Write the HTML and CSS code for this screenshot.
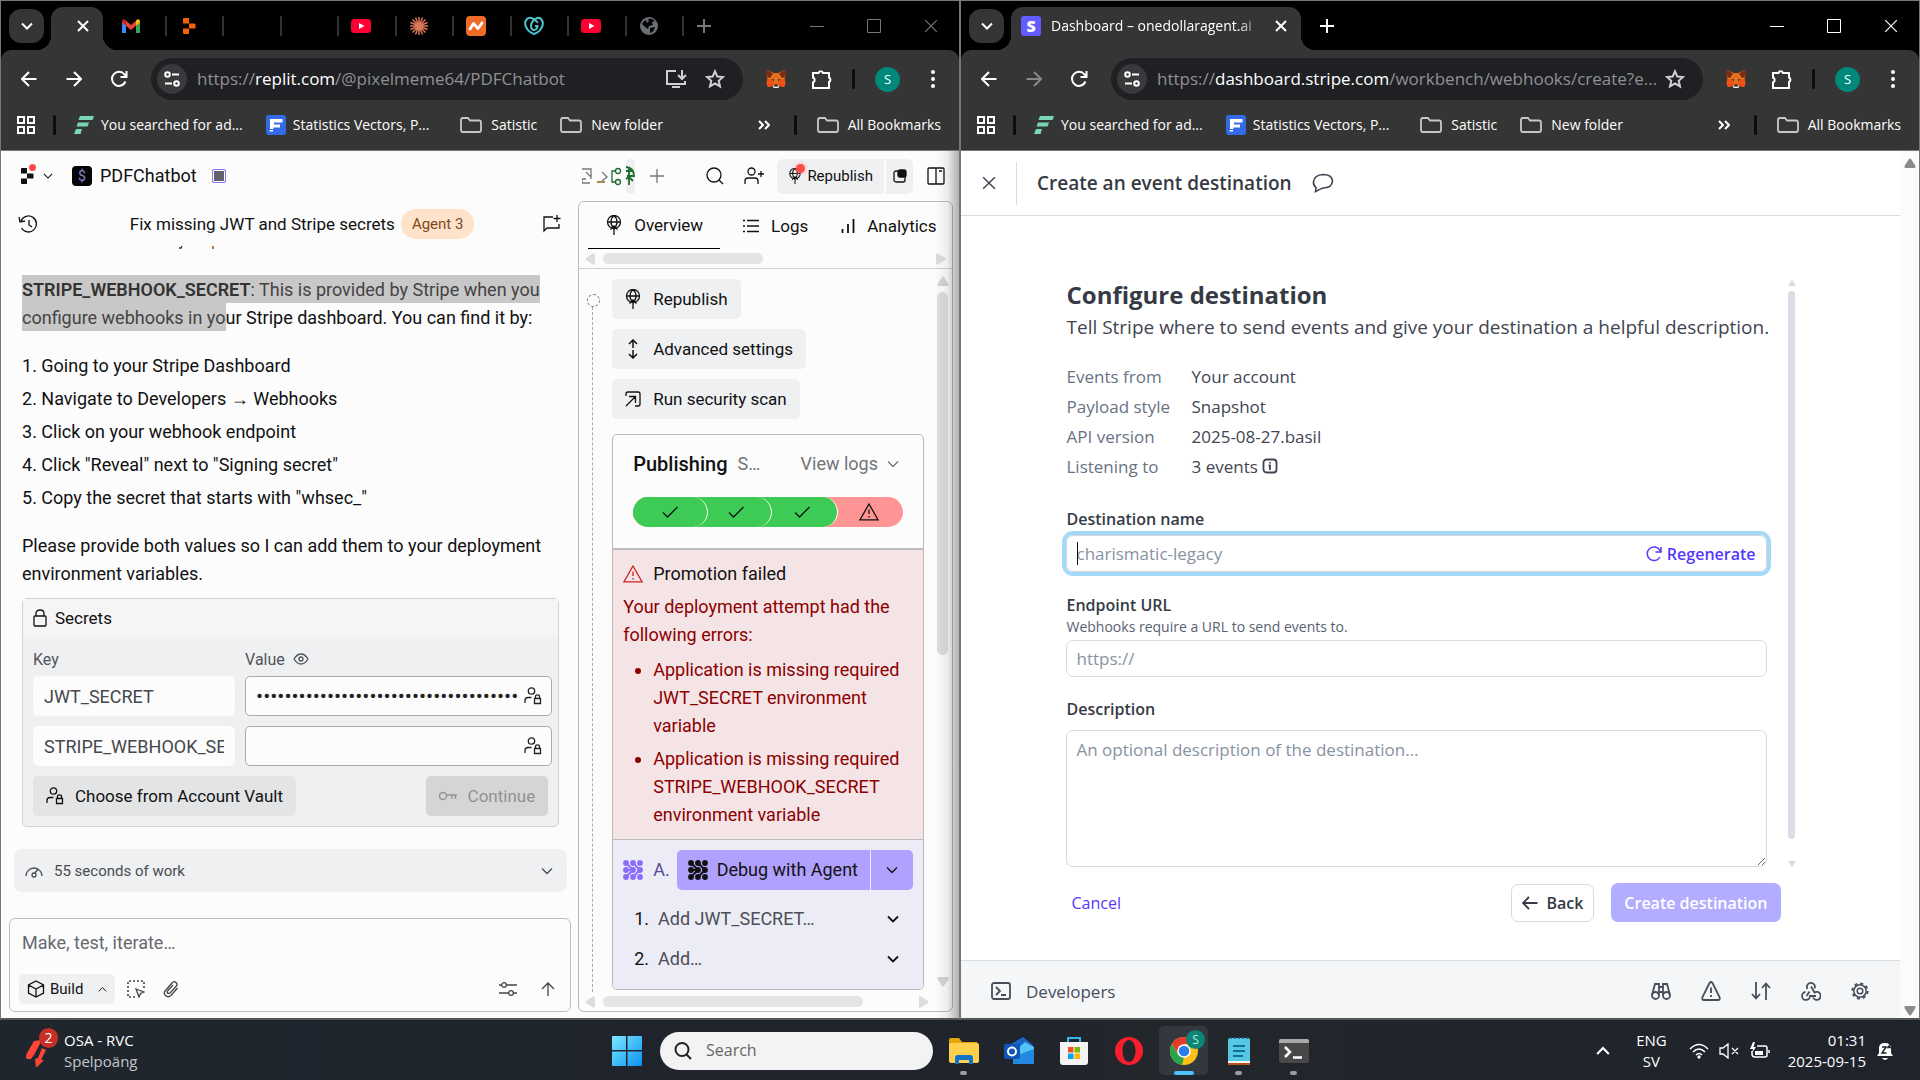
FILE: index.html
```html
<!DOCTYPE html>
<html lang="en">
<head>
<meta charset="utf-8">
<title>Desktop</title>
<link rel="stylesheet" href="styles.css">
</head>
<body>
<svg class="sprite" aria-hidden="true">
  <symbol id="chev" viewBox="0 0 12 12"><path d="M1 3.5 6 8.5 11 3.5"/></symbol>
  <symbol id="x" viewBox="0 0 12 12"><path d="M1 1 11 11M11 1 1 11"/></symbol>
  <symbol id="plus" viewBox="0 0 14 14"><path d="M7 0V14M0 7H14"/></symbol>
  <symbol id="arrow" viewBox="0 0 16 16"><path d="M15.500 8H1.500M8 1 1 8 8 15"/></symbol>
  <symbol id="reload" viewBox="0 0 18 18"><path d="M15.500 11.500A7 7 0 1 1 14.500 4.500L16 6M16.500 1V7H10.500"/></symbol>
  <symbol id="tune" viewBox="0 0 16 16"><circle cx="3.500" cy="3.500" r="2.300"/><path d="M8 3.500H15M1 12.500H8"/><circle cx="12.500" cy="12.500" r="2.300"/></symbol>
  <symbol id="star" viewBox="0 0 20 20"><path d="M10 2.300 12.300 7.500 18 8 13.700 11.800 15 17.400 10 14.400 5 17.400 6.300 11.800 2 8 7.700 7.500Z"/></symbol>
  <symbol id="fox" viewBox="0 0 20 20"><g stroke="none"><path fill="#e2701c" d="M1 1 8 4H12L19 1 20 6 18.500 10 19.500 14 18 18 13 17 11.500 19H8.500L7 17 2 18 .500 14 1.500 10 0 6Z"/><path fill="#7a2a10" d="M1 1 7 4.500 4 9 1 8 0 6ZM19 1 13 4.500 16 9 19 8 20 6Z"/><path fill="#f04f16" d="M1.500 10 6.500 11 8 14 7 17 2 18 .500 14ZM18.500 10 13.500 11 12 14 13 17 18 18 19.500 14Z"/><path fill="#1f2937" d="M5.500 10.500 8 10 8 12ZM14.500 10.500 12 10 12 12Z"/><path fill="#f5f5f5" d="M7 16 8.500 17H11.500L13 16 12.500 19H7.500Z"/><path fill="#222" d="M8.500 15.500H11.500L12 17.500H8Z"/></g></symbol>
  <symbol id="puzzle" viewBox="0 0 22 22"><path d="M2 5H7.500A2.300 2.300 0 0 1 12 5H18V9.500A2.500 2.500 0 0 1 18 14V20H2V14.500A2.700 2.700 0 0 0 2 9.500Z"/></symbol>
  <symbol id="grid" viewBox="0 0 18 18"><path d="M1 1H7V7H1ZM11 1H17V7H11ZM1 11H7V17H1ZM11 11H17V17H11Z"/></symbol>
  <symbol id="folder" viewBox="0 0 22 16"><path d="M1 3Q1 1 3 1H8L10 3.500H19Q21 3.500 21 5.500V13Q21 15 19 15H3Q1 15 1 13Z"/></symbol>
  <symbol id="more" viewBox="0 0 12 10"><path d="M1 1 5 5 1 9M7 1 11 5 7 9"/></symbol>
  <symbol id="fgreen" viewBox="0 0 20 18"><path fill="#76d7b2" d="M6 0H20L18.500 4H4.500ZM4 6.500H15L13.500 10.500H2.500ZM2 13H8L6.500 18H0Z"/></symbol>
  <symbol id="fblue" viewBox="0 0 20 20"><rect width="20" height="20" rx="3" fill="#316be8"/><path fill="#fff" d="M4 4H16.500V7.500H8V9.500H14V12.500H7.500V14H4ZM3.500 15H7V16.500H3.500Z"/></symbol>
  <symbol id="yt" viewBox="0 0 20 20"><rect y="3" width="20" height="14" rx="3.500" fill="#ff0033"/><path fill="#fff" d="M8 7 13.500 10 8 13Z"/></symbol>
  <symbol id="replit" viewBox="0 0 14 16"><path stroke="none" fill="currentColor" d="M2 0H7V5.500H1V1Q1 0 2 0ZM7 5.500H12.500Q13.500 5.500 13.500 6.500V10.500H7ZM1 10.500H7V16H2Q1 16 1 15Z"/></symbol>
  <symbol id="globe" viewBox="0 0 16 20"><circle cx="8" cy="7" r="6.500"/><path d="M1.500 7H14.500M8 .500C4 4 4 10 8 13.500C12 10 12 4 8 .500"/><path d="M8 20V11M4.500 14.500 8 11 11.500 14.500"/></symbol>
  <symbol id="vault" viewBox="0 0 18 18"><circle cx="7.500" cy="4" r="3.200"/><path d="M1 16V13.500Q1 10.500 4 10.500H7.500"/><path d="M10.500 11.500H16.500V16.500H10.500ZM11.500 11.500V9.500Q11.500 7.800 13.500 7.800T15.500 9.500V11.500"/></symbol>
  <symbol id="warn" viewBox="0 0 20 18"><path d="M10 1 19 16.800H1Z"/><path d="M10 6.500V11M10 13V14.500"/></symbol>
  <symbol id="check" viewBox="0 0 16 12"><path d="M1 6.500 5.500 11 15.500 1"/></symbol>
  <symbol id="agent" viewBox="0 0 20 20"><g fill="currentColor" stroke="none"><circle cx="3" cy="3" r="2.900"/><circle cx="10" cy="3" r="2.900"/><circle cx="17" cy="3" r="2.900"/><circle cx="3" cy="10" r="2.900"/><circle cx="10" cy="10" r="2.900"/><circle cx="17" cy="10" r="2.900"/><circle cx="3" cy="17" r="2.900"/><circle cx="10" cy="17" r="2.900"/><circle cx="17" cy="17" r="2.900"/></g><path stroke="currentColor" stroke-width="2" fill="none" d="M3 3 10 10 3 17M10 3 17 10 10 17M3 10H10"/></symbol>
  <symbol id="tri" viewBox="0 0 12 10"><path fill="currentColor" d="M5 1Q6 0 7 1L11.500 8Q12 10 10.500 10H1.500Q0 10 .500 8Z"/></symbol>
</svg>

<div class="desktop">
  <section class="window">
    <header class="chrome">
      <div class="tabstrip dim">
        <button class="tabsearch" aria-label="Search tabs"><svg width="12" height="12"><use href="#chev"/></svg></button>
        <div class="tab-active small"><button aria-label="Close tab"><svg width="12" height="12"><use href="#x"/></svg></button></div>
        <div class="tabs">
          <span class="tab"><svg width="20" height="20" viewBox="0 0 20 20"><path fill="#4285f4" d="M1 5V17H5V8Z"/><path fill="#34a853" d="M15 8V17H19V5Z"/><path fill="#ea4335" d="M4 4 10 9 16 4V9L10 14 4 9Z"/><path fill="#c5221f" d="M1 5Q2 2 5 4.500V9.500L1 6.500Z"/><path fill="#fbbc04" d="M19 5Q18 2 15 4.500V9.500L19 6.500Z"/></svg></span>
          <span class="tab orange"><svg width="20" height="16"><use href="#replit"/></svg></span>
          <span class="tab"></span>
          <span class="tab"></span>
          <span class="tab"><svg width="20" height="20"><use href="#yt"/></svg></span>
          <span class="tab"><svg width="20" height="20" viewBox="0 0 20 20"><path stroke="#d97757" stroke-width="1.500" d="M10 1V19M1 10H19M3.500 3.500 16.500 16.500M16.500 3.500 3.500 16.500M6.500 1.500 13.500 18.500M13.500 1.500 6.500 18.500M1.500 6.500 18.500 13.500M18.500 6.500 1.500 13.500"/></svg></span>
          <span class="tab"><svg width="20" height="20" viewBox="0 0 20 20"><rect width="20" height="20" rx="4" fill="#f06a28"/><path stroke="#fff" stroke-width="2.800" fill="none" stroke-linejoin="round" stroke-linecap="round" d="M4 13 7.500 7.500 12 12.500 16 7"/></svg></span>
          <span class="tab"><svg width="20" height="20" viewBox="0 0 20 20"><path stroke="#4fc4cf" stroke-width="2" d="M10 18C2 15 -1 7 3 3C6 0 11 3 14 7M10 18C18 15 21 7 17 3C14 0 8 4 7 9Q7 14 10 14T13.500 10H11"/></svg></span>
          <span class="tab"><svg width="20" height="20"><use href="#yt"/></svg></span>
          <span class="tab"><svg width="20" height="20" viewBox="0 0 20 20"><circle cx="10" cy="10" r="9" fill="#6b6e74"/><path fill="#050505" d="M9 3Q13 2 16 5L13 6 14 9 10 10 9 13 6 11 3 8Q4 5 7 4L8 7 10 5ZM11 12 16 11Q15 16 11 17Z"/></svg></span>
        </div>
        <button class="newtab" aria-label="New tab"><svg width="14" height="14"><use href="#plus"/></svg></button>
        <div class="winctl">
          <button aria-label="Minimize"><svg width="14" height="14"><path d="M0 7.500H14"/></svg></button>
          <button aria-label="Maximize"><svg width="14" height="14"><path d="M.500.500H13.500V13.500H.500Z"/></svg></button>
          <button aria-label="Close"><svg width="14" height="14" viewBox="0 0 12 12"><use href="#x"/></svg></button>
        </div>
      </div>
      <div class="toolbar">
        <button class="nav" aria-label="Back"><svg width="16" height="16"><use href="#arrow"/></svg></button>
        <button class="nav flip" aria-label="Forward"><svg width="16" height="16"><use href="#arrow"/></svg></button>
        <button class="nav" aria-label="Reload"><svg width="18" height="18"><use href="#reload"/></svg></button>
        <div class="omnibox">
          <button class="site" aria-label="Site information"><svg width="16" height="16"><use href="#tune"/></svg></button>
          <span class="url">https://<b>replit.com</b>/@pixelmeme64/PDFChatbot</span>
          <button aria-label="Install"><svg width="22" height="20" viewBox="0 0 22 20"><path d="M11 2H2V15H20V12M17 1V9M13 6 17 10 21 6M7 18H15"/></svg></button>
          <button class="fave" aria-label="Bookmark"><svg width="20" height="20"><use href="#star"/></svg></button>
        </div>
        <button class="ext" aria-label="MetaMask"><svg width="20" height="20"><use href="#fox"/></svg></button>
        <button class="ext" aria-label="Extensions"><svg width="22" height="22"><use href="#puzzle"/></svg></button>
        <span class="sep"></span>
        <button class="avatar">S</button>
        <button class="kebab" aria-label="Menu"><svg width="6" height="20"><g fill="#fff" stroke="none"><circle cx="3" cy="3" r="2"/><circle cx="3" cy="10" r="2"/><circle cx="3" cy="17" r="2"/></g></svg></button>
      </div>
      <nav class="bookmarks">
        <svg width="18" height="18"><use href="#grid"/></svg><span class="sep"></span>
        <a href="#" class="bm first"><svg width="20" height="18"><use href="#fgreen"/></svg>You searched for ad...</a>
        <a href="#" class="bm"><svg width="20" height="20"><use href="#fblue"/></svg>Statistics Vectors, P...</a>
        <a href="#" class="bm fold wide"><svg width="22" height="16"><use href="#folder"/></svg>Satistic</a>
        <a href="#" class="bm fold"><svg width="22" height="16"><use href="#folder"/></svg>New folder</a>
        <button class="overflow" aria-label="More bookmarks"><svg width="12" height="10"><use href="#more"/></svg></button><span class="sep"></span>
        <a href="#" class="bm fold last"><svg width="22" height="16"><use href="#folder"/></svg>All Bookmarks</a>
      </nav>
    </header>

    <main class="replit">
      <div class="topbar">
        <span class="logo"><svg width="14" height="16"><use href="#replit"/></svg></span>
        <svg class="thin" width="10" height="10"><use href="#chev"/></svg>
        <span class="appicon">$</span>
        <span class="appname">PDFChatbot</span>
        <span class="swatch"></span>
        <span class="minis"><svg width="54" height="35" viewBox="0 0 54 35"><rect x="44" width="9" height="35" rx="4" fill="#eef0f2" stroke="none"/><g fill="none" stroke-width="1.300"><path stroke="#777" d="M0 10H9V20M4 13 9 18M0 24H8M0 24V20H4M20 13 25 18 20 22"/><path stroke="#a08b4a" stroke-width="2" d="M15 23H23"/><g stroke="#1c6b2c"><path d="M33 12H30V23H33"/><circle cx="36" cy="12" r="2.500"/><circle cx="36" cy="23" r="2.500"/><path d="M44 8Q52 9 52 17L45 17M44 12H51M47 8V26M44 20 47 18 51 22" stroke-width="1.800"/></g></g></svg></span>
        <svg class="muted" width="14" height="14"><use href="#plus"/></svg>
        <span class="topicons">
          <svg width="18" height="18" viewBox="0 0 18 18"><circle cx="8" cy="8" r="7"/><path d="M13 13 17 17"/></svg>
          <svg width="20" height="18" viewBox="0 0 20 18"><circle cx="7.500" cy="4.500" r="3.500"/><path d="M1 17V14Q1 11 4 11H11Q14 11 14 14V17M17 4V10M14 7H20"/></svg>
        </span>
        <button class="pub"><span class="pubico"><svg width="14" height="16" viewBox="0 0 16 20"><use href="#globe"/></svg></span>Republish</button>
        <button class="pub2" aria-label="Preview"><svg width="14" height="14" viewBox="0 0 14 14"><rect x="1" y="2" width="11" height="11" rx="2"/><rect x="5" y="1" width="8" height="7" rx="2" fill="#111"/></svg></button>
        <svg width="18" height="18" viewBox="0 0 18 18"><rect x="1" y="1" width="16" height="16" rx="1"/><path d="M9 1V17M12 4H15"/></svg>
      </div>
      <div class="panes">
        <section class="chat">
          <div class="chathead">
            <svg width="20" height="18" viewBox="0 0 20 18"><path d="M3 6A8 8 0 1 1 3.500 13M1 2 2 7 7 6M11 5V10L14 12"/></svg>
            <h2>Fix missing JWT and Stripe secrets</h2><span class="badge">Agent 3</span>
            <svg class="end" width="20" height="18" viewBox="0 0 20 18"><path d="M11 2H2V16L5 13H17V9M15 0V7M11.500 3.500H18.500"/></svg>
          </div>
          <div class="chatbody">
            <svg class="remnant" width="40" height="4" viewBox="0 0 40 4"><path d="M4 0 3 2H1" stroke="#333"/><path d="M35 0V3" stroke="#c1762c" stroke-width="2"/></svg>
            <p><mark><b>STRIPE_WEBHOOK_SECRET</b>: This is provided by Stripe when you configure webhooks in yo</mark>ur Stripe dashboard. You can find it by:</p>
            <ol>
              <li>Going to your Stripe Dashboard</li>
              <li>Navigate to Developers → Webhooks</li>
              <li>Click on your webhook endpoint</li>
              <li>Click "Reveal" next to "Signing secret"</li>
              <li>Copy the secret that starts with "whsec_"</li>
            </ol>
            <p>Please provide both values so I can add them to your deployment environment variables.</p>
            <form class="secrets">
              <h3><svg width="14" height="18" viewBox="0 0 14 18"><rect x="1" y="7" width="12" height="10" rx="1"/><path d="M3 7V4.500Q3 1 7 1T11 4.500V7"/></svg>Secrets</h3>
              <div class="sgrid">
                <span class="lab">Key</span>
                <span class="lab">Value <svg width="16" height="12" viewBox="0 0 16 12"><path d="M1 6Q4 1 8 1T15 6Q12 11 8 11T1 6Z"/><circle cx="8" cy="6" r="2"/></svg></span>
                <input class="key" readonly aria-label="Key 1" value="JWT_SECRET">
                <span class="val"><input type="password" aria-label="Value 1" value="0123456789012345678901234567890123456789012"><svg width="18" height="18"><use href="#vault"/></svg></span>
                <input class="key" readonly aria-label="Key 2" value="STRIPE_WEBHOOK_SECRET">
                <span class="val"><input type="password" aria-label="Value 2"><svg width="18" height="18"><use href="#vault"/></svg></span>
              </div>
              <div class="sbtns">
                <button type="button"><svg width="18" height="18"><use href="#vault"/></svg>Choose from Account Vault</button>
                <button type="button" class="cont" disabled><svg width="18" height="10" viewBox="0 0 18 10"><circle cx="4" cy="5" r="3.500"/><path d="M7.500 4H18M13 4V8M16.500 4V8"/></svg>Continue</button>
              </div>
            </form>
          </div>
          <button class="work"><svg width="18" height="14" viewBox="0 0 18 14"><path d="M1 12A8 8 0 1 1 17 12M10 9 13 5"/><circle cx="9" cy="11" r="2"/></svg>55 seconds of work<svg class="end" width="12" height="12"><use href="#chev"/></svg></button>
          <div class="composer">
            <textarea rows="1" aria-label="Message" placeholder="Make, test, iterate…"></textarea>
            <div class="ctools">
              <button class="build"><svg width="18" height="18" viewBox="0 0 18 18"><path d="M9 1 16.500 5V13L9 17 1.500 13V5ZM1.500 5 9 9 16.500 5M9 9V17"/></svg>Build<svg class="flipy" width="9" height="9"><use href="#chev"/></svg></button>
              <svg width="18" height="18" viewBox="0 0 18 18"><path stroke-dasharray="2 2" stroke-width="1.600" d="M8 17H1V1H17V8"/><path d="M9 9 17 12 13.500 13.500 12 17Z"/></svg>
              <svg class="clip" width="16" height="18" viewBox="0 0 16 18"><path d="M14.500 8 8 15.500Q5 18 2.500 15.500T2.500 10.500L9 3Q11 .500 13 2.500T13 6.500L7 13Q5.500 14 4.500 13T5 10.500L10 5"/></svg>
              <svg class="end" width="18" height="14" viewBox="0 0 18 14"><circle cx="5" cy="3" r="2.300"/><circle cx="12" cy="11" r="2.300"/><path d="M0 3H2.700M7.300 3H18M0 11H9.700M14.300 11H18"/></svg>
              <svg width="14" height="14" viewBox="0 0 14 14"><path d="M7 14V1M1 7 7 1 13 7"/></svg>
            </div>
          </div>
        </section>

        <section class="deploy">
          <nav class="dtabs">
            <a href="#" class="on"><svg width="16" height="20"><use href="#globe"/></svg>Overview</a>
            <a href="#"><svg width="16" height="14" viewBox="0 0 16 14"><path d="M4 1.500H16M4 7H16M4 12.500H16M0 1.500H2M0 7H2M0 12.500H2"/></svg>Logs</a>
            <a href="#"><svg width="14" height="14" viewBox="0 0 14 14"><path stroke-width="1.800" d="M1.500 14V10M7 14V5M12.500 14V0"/></svg>Analytics</a>
          </nav>
          <div class="hscroll top"><svg class="left" width="12" height="10"><use href="#tri"/></svg><i></i><svg class="right" width="12" height="10"><use href="#tri"/></svg></div>
          <div class="dbody">
            <div class="timeline"></div>
            <div class="dmain">
              <button class="act"><svg width="16" height="20"><use href="#globe"/></svg>Republish</button>
              <button class="act"><svg width="16" height="20" viewBox="0 0 16 20"><path stroke-width="1.500" d="M8 9V1M4 5 8 1 12 5M8 11V19M4 15 8 19 12 15"/></svg>Advanced settings</button>
              <button class="act"><svg width="16" height="20" viewBox="0 0 16 20"><path d="M1 7V5Q1 3 3 3H13Q15 3 15 5V15Q15 17 13 17H10M1 17 10 8M4 7.500H10.500V14"/></svg>Run security scan</button>
              <div class="card">
                <div class="pubhead">
                  <div class="prow"><h3>Publishing</h3><span class="gray">S…</span><button class="gray vlogs">View logs<svg width="12" height="12"><use href="#chev"/></svg></button></div>
                  <div class="steps"><span><svg width="16" height="12"><use href="#check"/></svg></span><span><svg width="16" height="12"><use href="#check"/></svg></span><span><svg width="16" height="12"><use href="#check"/></svg></span><span class="bad"><svg width="20" height="18"><use href="#warn"/></svg></span></div>
                </div>
                <div class="fail">
                  <p class="ftitle"><svg width="20" height="18"><use href="#warn"/></svg>Promotion failed</p>
                  <p>Your deployment attempt had the following errors:</p>
                  <ul><li>Application is missing required JWT_SECRET environment variable</li><li>Application is missing required STRIPE_WEBHOOK_SECRET environment variable</li></ul>
                </div>
                <div class="debug">
                  <div class="drow"><svg class="purple" width="20" height="20"><use href="#agent"/></svg><span class="a">A.</span><button class="dbg"><svg width="20" height="20"><use href="#agent"/></svg>Debug with Agent</button><button class="dd" aria-label="More"><svg width="12" height="12"><use href="#chev"/></svg></button></div>
                  <button class="todo"><b>1.</b>Add JWT_SECRET…<svg width="12" height="12"><use href="#chev"/></svg></button>
                  <button class="todo"><b>2.</b>Add…<svg width="12" height="12"><use href="#chev"/></svg></button>
                </div>
              </div>
            </div>
            <div class="vscroll"><svg width="12" height="10"><use href="#tri"/></svg><i></i><svg class="down" width="12" height="10"><use href="#tri"/></svg></div>
          </div>
          <div class="hscroll bottom"><svg class="left" width="12" height="10"><use href="#tri"/></svg><i></i><svg class="right" width="12" height="10"><use href="#tri"/></svg></div>
        </section>
      </div>
      <div class="shade"></div>
    </main>
  </section>

  <section class="window">
    <header class="chrome">
      <div class="tabstrip">
        <button class="tabsearch" aria-label="Search tabs"><svg width="12" height="12"><use href="#chev"/></svg></button>
        <div class="tab-active"><span class="fav">S</span><span class="ttl">Dashboard – onedollaragent.ai</span><button aria-label="Close tab"><svg width="12" height="12"><use href="#x"/></svg></button></div>
        <button class="newtab" aria-label="New tab"><svg width="14" height="14"><use href="#plus"/></svg></button>
        <div class="winctl">
          <button aria-label="Minimize"><svg width="14" height="14"><path d="M0 7.500H14"/></svg></button>
          <button aria-label="Maximize"><svg width="14" height="14"><path d="M.500.500H13.500V13.500H.500Z"/></svg></button>
          <button aria-label="Close"><svg width="14" height="14" viewBox="0 0 12 12"><use href="#x"/></svg></button>
        </div>
      </div>
      <div class="toolbar">
        <button class="nav" aria-label="Back"><svg width="16" height="16"><use href="#arrow"/></svg></button>
        <button class="nav flip off" aria-label="Forward" disabled><svg width="16" height="16"><use href="#arrow"/></svg></button>
        <button class="nav" aria-label="Reload"><svg width="18" height="18"><use href="#reload"/></svg></button>
        <div class="omnibox">
          <button class="site" aria-label="Site information"><svg width="16" height="16"><use href="#tune"/></svg></button>
          <span class="url">https://<b>dashboard.stripe.com</b>/workbench/webhooks/create?e...</span>
          <button aria-label="Bookmark"><svg width="20" height="20"><use href="#star"/></svg></button>
        </div>
        <button class="ext" aria-label="MetaMask"><svg width="20" height="20"><use href="#fox"/></svg></button>
        <button class="ext" aria-label="Extensions"><svg width="22" height="22"><use href="#puzzle"/></svg></button>
        <span class="sep"></span>
        <button class="avatar">S</button>
        <button class="kebab" aria-label="Menu"><svg width="6" height="20"><g fill="#fff" stroke="none"><circle cx="3" cy="3" r="2"/><circle cx="3" cy="10" r="2"/><circle cx="3" cy="17" r="2"/></g></svg></button>
      </div>
      <nav class="bookmarks">
        <svg width="18" height="18"><use href="#grid"/></svg><span class="sep"></span>
        <a href="#" class="bm first"><svg width="20" height="18"><use href="#fgreen"/></svg>You searched for ad...</a>
        <a href="#" class="bm"><svg width="20" height="20"><use href="#fblue"/></svg>Statistics Vectors, P...</a>
        <a href="#" class="bm fold wide"><svg width="22" height="16"><use href="#folder"/></svg>Satistic</a>
        <a href="#" class="bm fold"><svg width="22" height="16"><use href="#folder"/></svg>New folder</a>
        <button class="overflow" aria-label="More bookmarks"><svg width="12" height="10"><use href="#more"/></svg></button><span class="sep"></span>
        <a href="#" class="bm fold last"><svg width="22" height="16"><use href="#folder"/></svg>All Bookmarks</a>
      </nav>
    </header>

    <main class="stripe">
      <div class="spage">
        <header class="shead"><button class="close" aria-label="Close"><svg width="14" height="14"><use href="#x"/></svg></button><h1>Create an event destination</h1><svg width="22" height="20" viewBox="0 0 22 20"><path stroke-width="1.600" d="M3.500 18.500 4 14.500Q1 12 1.500 8.500Q2.500 2 11 1.500Q20 1.500 20.500 8Q20 15 11 15Q7 16.500 3.500 18.500Z"/></svg></header>
        <form class="config">
          <div class="scrollarea">
            <div class="fields">
              <h2>Configure destination</h2>
              <p class="lead">Tell Stripe where to send events and give your destination a helpful description.</p>
              <dl><dt>Events from</dt><dd>Your account</dd><dt>Payload style</dt><dd>Snapshot</dd><dt>API version</dt><dd>2025-08-27.basil</dd><dt>Listening to</dt><dd>3 events <svg width="16" height="16" viewBox="0 0 16 16"><rect x="1.500" y="1.500" width="13" height="13" rx="3" stroke-width="1.800"/><path stroke-width="1.800" d="M8 4V5.500M6.500 7.500H8V12"/></svg></dd></dl>
              <label for="name">Destination name</label>
              <div class="namebox"><i class="caret"></i><input id="name" placeholder="charismatic-legacy"><button type="button"><svg width="16" height="16" viewBox="0 0 16 16"><path stroke-width="1.500" d="M14 11A6.800 6.800 0 1 1 14 4.500L15 6M15 1V6H9.500"/></svg>Regenerate</button></div>
              <label for="url">Endpoint URL</label>
              <small>Webhooks require a URL to send events to.</small>
              <input id="url" class="field" placeholder="https://">
              <label for="desc">Description</label>
              <textarea id="desc" class="field" placeholder="An optional description of the destination…"></textarea>
            </div>
            <div class="sbar"><svg width="8" height="6" viewBox="0 0 12 10"><use href="#tri"/></svg><i></i><svg class="down" width="8" height="6" viewBox="0 0 12 10"><use href="#tri"/></svg></div>
          </div>
          <div class="actions"><a href="#">Cancel</a><button type="button" class="back"><svg width="16" height="14" viewBox="0 0 16 14"><path stroke-width="1.800" d="M15.500 7H1.500M7 1 1 7 7 13"/></svg>Back</button><button type="button" class="create" disabled>Create destination</button></div>
        </form>
        <footer class="sfoot">
          <svg width="20" height="18" viewBox="0 0 20 18"><rect x="1" y="1" width="18" height="16" rx="2"/><path d="M5 5 9 9 5 13M10 13H15"/></svg><span>Developers</span>
          <svg width="20" height="18" viewBox="0 0 20 18"><circle cx="4.500" cy="13.500" r="3.500"/><circle cx="15.500" cy="13.500" r="3.500"/><path d="M1 13 4 2H8V13M19 13 16 2H12V13M8 5H12M8 10H12"/></svg>
          <svg width="20" height="20" viewBox="0 0 20 20"><path d="M8.500 2Q10 0 11.500 2L18.500 16Q19.500 19 17 19H3Q.500 19 1.500 16ZM10 6.500V12M10 14V16"/></svg>
          <svg width="20" height="18" viewBox="0 0 20 18"><path d="M5 0V16M1 12 5 16.500 9 12M15 18V2M11 6 15 1.500 19 6"/></svg>
          <svg width="20" height="20" viewBox="0 0 20 20"><path d="M6.500 8A4 4 0 1 1 13.500 7.500M10 5.500 13.500 11.500A4 4 0 1 1 12 16.500M8.500 10.500 5.500 15M4.500 11A4 4 0 1 0 9 15H15"/></svg>
          <svg width="18" height="18" viewBox="0 0 18 18"><circle cx="9" cy="9" r="2.800" stroke-width="1.500"/><circle cx="9" cy="9" r="6.200" stroke-width="1.500"/><circle cx="9" cy="9" r="7.600" stroke-dasharray="2.970 3" stroke-width="2"/></svg>
        </footer>
      </div>
      <div class="wscroll"><svg width="12" height="10"><use href="#tri"/></svg><svg class="down" width="12" height="10"><use href="#tri"/></svg></div>
    </main>
  </section>
</div>

<footer class="taskbar">
  <div class="news"><span class="nicon"><svg width="32" height="32" viewBox="0 0 32 32"><path fill="#ff4438" d="M8 6 16 5 8 20 5 24H1Q-1 22 1 18ZM16 13 20 15 15 25 18 25 10 33 9 24 12 23Z"/></svg><em>2</em></span><p>OSA - RVC<br><span>Spelpoäng</span></p></div>
  <div class="apps">
    <svg width="30" height="30" viewBox="0 0 30 30"><defs><linearGradient id="w" x2="1" y2="1"><stop stop-color="#7de8ff"/><stop offset="1" stop-color="#0a93f5"/></linearGradient></defs><path fill="url(#w)" d="M0 1Q0 0 1 0H14V14H0ZM15.500 0H29Q30 0 30 1V14H15.500ZM0 15.500H14V30H1Q0 30 0 29ZM15.500 15.500H30V29Q30 30 29 30H15.500Z"/></svg>
    <label class="search"><svg width="18" height="18" viewBox="0 0 18 18"><circle cx="8" cy="7.500" r="6.500" stroke="#222" stroke-width="2"/><path stroke="#222" stroke-width="2" d="M12.500 12.500 17 17"/></svg><input aria-label="Search" placeholder="Search"></label>
    <span class="app run"><svg width="32" height="28" viewBox="0 0 32 28"><path fill="#e5a50a" d="M1 3Q1 1 3 1H11L14 5H29V12H1Z"/><rect x="1" y="6" width="30" height="20" rx="2" fill="#ffd04d"/><path fill="#1173cc" d="M7 27V21Q7 18 10 18H22Q25 18 25 21V27H21V23H11V27Z"/></svg></span>
    <span class="app"><svg width="32" height="28" viewBox="0 0 32 28"><path fill="#1b66c9" d="M8 7 20 0 30 8V15H8Z"/><path fill="#52c3f5" d="M14 12 22 5 31 10V25Q31 27 28 27H10V15Z"/><path fill="#2389e0" d="M10 20 31 12V25Q31 27 28 27H10Z"/><rect x="1" y="7" width="16" height="15" rx="2" fill="#0f56b8"/><circle cx="9" cy="14.500" r="4" fill="none" stroke="#fff" stroke-width="2"/></svg></span>
    <span class="app"><svg width="30" height="30" viewBox="0 0 30 30"><path fill="none" stroke="#3bb4f2" stroke-width="2" d="M9 8V2H21V8"/><path fill="#f4f4f4" d="M1 6H29V26Q29 29 26 29H4Q1 29 1 26Z"/><path fill="#f25022" d="M9 11H14.500V16.500H9Z"/><path fill="#7fba00" d="M15.500 11H21V16.500H15.500Z"/><path fill="#00a4ef" d="M9 17.500H14.500V23H9Z"/><path fill="#ffb900" d="M15.500 17.500H21V23H15.500Z"/></svg></span>
    <span class="app"><svg width="30" height="30" viewBox="0 0 30 30"><path fill="#fa1e2d" fill-rule="evenodd" d="M15 1A14 14 0 1 0 15 29A14 14 0 1 0 15 1ZM15 4C19 4 21.500 9 21.500 15S19 26 15 26 8.500 21 8.500 15 11 4 15 4Z"/></svg></span>
    <span class="app cur"><svg width="30" height="30" viewBox="0 0 30 30"><circle cx="15" cy="15" r="14" fill="#fbc116"/><path fill="#e33b2e" d="M15 15V8H27Q23 1 15 1T2.900 8L9 18Z"/><path fill="#2ba24c" d="M2.900 8 9 18.500 15 21.500 13 29Q1 26 1 15 1 11 2.900 8Z"/><circle cx="15" cy="15" r="6.800" fill="#fff"/><circle cx="15" cy="15" r="5.300" fill="#2b7de9"/></svg><em>S</em></span>
    <span class="app run"><svg width="24" height="30" viewBox="0 0 24 30"><rect x="1" y="2" width="22" height="27" rx="2" fill="#55c8e6"/><path stroke="#16627f" stroke-width="1.500" stroke-dasharray="2 2" d="M3 2H21"/><path stroke="#14708f" stroke-width="2" d="M6 10H18M6 15H18M6 20H16"/><path fill="#f5f5f5" d="M1 25H23V27H1Z"/><path fill="#b5541c" d="M1 27H23V29H1Z"/></svg></span>
    <span class="app run"><svg width="30" height="24" viewBox="0 0 30 24"><rect width="30" height="24" rx="2" fill="#484848"/><path fill="#aaa" d="M0 2Q0 0 2 0H28Q30 0 30 2V4H0Z"/><path stroke="#fff" stroke-width="2.500" fill="none" d="M6 8 11 13 6 18M14 18.500H23"/></svg></span>
  </div>
  <div class="tray">
    <svg width="14" height="14" class="flipy" viewBox="0 0 12 12"><use href="#chev"/></svg>
    <p class="lang">ENG<br>SV</p>
    <svg width="20" height="16" viewBox="0 0 20 16"><path stroke-width="1.600" d="M1 6Q10 -3 19 6M4 9Q10 3 16 9M7 12Q10 9 13 12"/><circle cx="10" cy="14" r="1" fill="#fff"/></svg>
    <svg width="20" height="16" viewBox="0 0 20 16"><path d="M1 5H4L9 1V15L4 11H1ZM13 5 19 11M19 5 13 11"/></svg>
    <svg width="22" height="18" viewBox="0 0 22 18"><path stroke-width="1.500" d="M8 4H16Q18 4 18 6V13Q18 15 16 15H6Q3 15 3 12V9M20 8V11"/><path fill="#fff" stroke="none" d="M4 0 1 7H4L3 11 7 5H4.500L6 0ZM6 9H14V13H6Z"/></svg>
    <p class="clock">01:31<br>2025-09-15</p>
    <span class="bell"><svg width="18" height="20" viewBox="0 0 18 20"><path fill="#fff" stroke="none" d="M1 15 3 12V7Q3 2 9 2T15 7V12L17 15ZM6 17H12Q9 21 6 17Z"/><path stroke="#1f242b" stroke-width="1.500" d="M6 6H10L6 12H10.500M12 2H15.500L12 6.500H16"/></svg></span>
  </div>
</footer>
</body>
</html>
```

FILE: styles.css
```css
* { box-sizing: border-box; }
body { margin: 0; min-height: 100vh; display: flex; flex-direction: column; font-family: "Open Sans", "Noto Sans", sans-serif; font-size: 14px; background: #1f242b; }
h1, h2, h3, p, ol, ul, dl, dd { margin: 0; padding: 0; }
button, input, textarea { font: inherit; color: inherit; border: 0; padding: 0; background: none; outline: 0; }
button { display: flex; align-items: center; justify-content: center; white-space: nowrap; }
a { color: inherit; text-decoration: none; }
em { font-style: normal; }
svg { flex: none; fill: none; stroke: currentColor; stroke-width: 1.3; }
.sprite { position: absolute; width: 0; height: 0; }
.end { margin-left: auto; }
.down, .flipy { transform: rotate(180deg); }

.desktop { flex: 1; display: grid; grid-template-columns: 1fr 1fr; }
.window { display: flex; flex-direction: column; min-width: 0; border: 1px solid #777; border-bottom: 2px solid #555; background: #000; }

/* browser chrome */
.chrome { color: #fff; border-bottom: 1px solid #777; }
.tabstrip { display: flex; height: 49px; padding-left: 8px; align-items: center; }
.tabstrip svg { stroke-width: 2; }
.tabsearch { width: 35px; height: 34px; border-radius: 12px; background: #353535; margin-right: 7px; }
.tab-active { position: relative; align-self: flex-end; display: flex; align-items: center; width: 290px; height: 43px; padding: 0 14px 6px 10px; border-radius: 12px 12px 0 0; background: #353535; }
.tab-active::before, .tab-active::after { content: ""; position: absolute; bottom: 0; width: 14px; height: 14px; }
.tab-active::before { right: 100%; background: radial-gradient(circle at 0 0, transparent 14px, #353535 14px); }
.tab-active::after { left: 100%; background: radial-gradient(circle at 100% 0, transparent 14px, #353535 14px); }
.tab-active button { margin-left: auto; }
.tab-active.small { width: 52px; }
.fav { width: 20px; height: 20px; margin-right: 10px; border-radius: 3px; background: #635bff; font-size: 16px; line-height: 20px; font-weight: 800; text-align: center; }
.ttl { width: 212px; overflow: hidden; white-space: nowrap; -webkit-mask-image: linear-gradient(90deg, #000 88%, transparent); mask-image: linear-gradient(90deg, #000 88%, transparent); }
.tabs { display: flex; flex: 0 1 575px; margin-left: 6px; }
.tab { flex: 1; display: flex; align-items: center; height: 20px; padding-left: 12px; border-right: 2px solid #333; }
.tab svg { stroke: none; }
.orange { color: #f26207; }
.newtab { width: 40px; height: 34px; }
.tab-active + .newtab { margin-left: 6px; }
.winctl { display: flex; margin-left: auto; }
.winctl button { width: 57px; height: 40px; }
.winctl svg { stroke-width: 1; }
.dim .winctl, .dim .newtab { color: #777; }
.toolbar { display: flex; align-items: center; height: 58px; padding: 0 23px 0 5px; border-radius: 10px 10px 0 0; background: #353535; }
.toolbar svg { stroke-width: 2; }
.nav { width: 45px; height: 42px; }
.flip svg { transform: scaleX(-1); }
.off { color: #888; }
.omnibox { flex: 1; min-width: 0; display: flex; align-items: center; height: 42px; margin: 0 22px 0 10px; padding: 0 18px 0 6px; border-radius: 21px; background: #1f2024; color: #d0d0d0; }
.site { width: 30px; height: 30px; margin-right: 10px; border-radius: 50%; background: #39393c; color: #fff; }
.fave { margin-left: 18px; }
.url { flex: 1; min-width: 0; white-space: nowrap; color: #919191; font-size: 17px; line-height: 24px; }
.url b { color: #fff; font-weight: 400; }
.ext { width: 22px; margin-right: 24px; }
.sep { width: 3px; height: 20px; border-radius: 2px; background: #0c0c0c; }
.toolbar .sep { margin-left: -5px; }
.avatar { width: 25px; height: 25px; margin: 0 30px 0 20px; border-radius: 50%; background: #00897b; font-size: 13px; }
.bookmarks { display: flex; align-items: center; height: 42px; padding: 0 18px 8px 16px; background: #353535; line-height: 20px; white-space: nowrap; }
.bookmarks svg { stroke-width: 2; }
.bookmarks > .sep:nth-child(2) { margin-left: 18px; }
.bm { display: flex; align-items: center; gap: 7px; margin-left: 23px; }
.bm.first { margin-left: 18px; }
.bm svg { stroke-width: 0; }
.fold { gap: 9px; }
.fold.wide { margin-left: 31px; }
.fold svg { stroke: #c8c8c8; stroke-width: 1.8; }
.overflow { margin: 0 24px 0 auto; }
.bm.last { margin-left: 20px; }

/* replit */
.replit { position: relative; flex: 1; display: flex; flex-direction: column; padding: 0 6px 6px 8px; background: #fcfcfc; color: #111; font-family: Roboto, sans-serif; font-size: 17px; line-height: 28px; }
.shade { position: absolute; top: 0; right: 0; bottom: 0; width: 24px; pointer-events: none; background: linear-gradient(90deg, transparent, rgba(0, 0, 0, .06) 50%, rgba(0, 0, 0, .3)); }
.topbar { display: flex; align-items: center; height: 50px; padding: 0 8px 0 11px; }
.logo { position: relative; display: flex; margin-right: 9px; }
.logo::after { content: ""; position: absolute; top: -4px; right: -2px; width: 7px; height: 7px; border-radius: 50%; background: #ff4b4b; }
.appicon { width: 20px; height: 20px; margin: 0 8px 0 19px; border-radius: 4px; background: #050505; color: #8f80d8; font-size: 14px; line-height: 20px; text-align: center; }
.appname { font-size: 18px; }
.swatch { width: 14px; height: 14px; margin-left: 15px; border: 1px solid #8a76f0; border-radius: 2px; background: #5f626b; box-shadow: inset 0 0 0 1px #fff; }
.minis { display: flex; margin: 0 14px 0 auto; }
.muted { color: #777; }
.topicons { display: flex; gap: 20px; margin: 0 13px 0 42px; }
.pub { height: 35px; padding: 0 11px; border-radius: 6px 0 0 6px; background: #eff0f2; font-size: 15px; gap: 5px; }
.pubico { position: relative; display: flex; }
.pubico::after { content: ""; position: absolute; top: -4px; right: -3px; width: 9px; height: 9px; border-radius: 50%; background: #ff4b4b; box-shadow: 0 0 5px #ff9a9a; }
.pub2 { width: 27px; height: 35px; margin: 0 14px 0 2px; border-radius: 0 6px 6px 0; background: #eff0f2; }
.panes { flex: 1; display: grid; grid-template-columns: minmax(0, 3fr) minmax(0, 2fr); gap: 7px; }
.chat { display: flex; flex-direction: column; min-width: 0; }
.chathead { display: flex; align-items: center; height: 45px; padding: 0 9px; }
.chathead h2 { margin: 0 6px 0 auto; padding-left: 24px; font-size: 17px; font-weight: 400; }
.badge { height: 30px; padding: 0 11px; border-radius: 15px; background: #ffe2ca; color: #7c4a1e; font-size: 15px; line-height: 30px; }
.chatbody { padding: 0 12px 0 13px; font-size: 18px; }
.remnant { display: block; margin: 0 0 26px 156px; }
mark { background: #c8c8c8; color: #444; padding: 4px 0 3px; }
mark b { color: #333; font-weight: 600; }
ol { list-style-position: inside; display: grid; gap: 5px; margin: 20px 0; padding: 0; }
ol li::marker { content: counter(list-item) ". "; }
.secrets { margin: 10px 0 22px; border: 1px solid #d0d2d4; border-radius: 5px; background: #eff0f2; }
.secrets h3 { display: flex; align-items: center; gap: 8px; height: 38px; padding: 0 10px; background: #f5f5f5; font-size: 17px; font-weight: 400; }
.sgrid { display: grid; grid-template-columns: minmax(0, 202fr) minmax(0, 307fr); gap: 10px; padding: 9px 6px 10px 10px; }
.lab { height: 20px; line-height: 28px; font-size: 16px; color: #51545a; }
.lab svg { margin-left: 4px; }
.key, .val { width: 100%; min-width: 0; height: 40px; padding: 0 11px; border-radius: 5px; background: #fcfcfc; color: #45484d; }
.val { display: flex; align-items: center; gap: 6px; padding: 0 9px 0 10px; border: 1px solid #a9abad; color: #222; }
.val input { flex: 1; min-width: 0; font-size: 21px; }
.sbtns { display: flex; justify-content: space-between; padding: 0 10px 10px; font-size: 17px; }
.sbtns button { height: 40px; padding: 0 13px; gap: 11px; border-radius: 5px; background: #e3e4e6; }
.sbtns .cont { background: #d5d5d5; color: #909294; }
.work { justify-content: flex-start; height: 43px; margin: 0 4px 0 5px; padding: 0 14px 0 11px; gap: 11px; border-radius: 8px; background: #eff0f2; color: #484b50; font-size: 15px; }
.composer { display: flex; flex-direction: column; gap: 17px; margin-top: auto; padding: 10px 9px 7px; border: 1px solid #bcbec0; border-radius: 6px; height: 94px; }
.composer textarea { height: 28px; padding-left: 3px; resize: none; font-size: 18px; line-height: 28px; overflow: hidden; }
.composer ::placeholder { color: #666a70; opacity: 1; }
.ctools { display: flex; align-items: center; height: 30px; gap: 18px; padding-right: 6px; color: #444; }
.build { height: 30px; margin-right: -6px; padding: 0 8px; border-radius: 5px; background: #eff0f2; color: #111; font-size: 15px; gap: 5px; }
.build .flipy { margin-left: 10px; }
.ctools .end + svg { margin-left: 6px; }

/* deployment pane */
.deploy { display: flex; flex-direction: column; min-width: 0; border: 1px solid #b9bbbd; border-radius: 6px; }
.dtabs { display: flex; gap: 13px; height: 47px; padding-left: 9px; overflow: hidden; white-space: nowrap; }
.dtabs a { display: flex; align-items: center; gap: 12px; padding: 0 10px; }
.dtabs .on { padding: 0 17px 0 18px; border-bottom: 1px solid #000; }
.hscroll { display: flex; align-items: center; height: 19px; padding: 0 5px; color: #dcdddf; }
.hscroll svg, .vscroll svg, .wscroll svg, .sbar svg { stroke: none; }
.hscroll i { height: 11px; margin: 0 auto 0 7px; border-radius: 6px; background: #e3e4e6; width: 44%; }
.hscroll .left { transform: rotate(-90deg); }
.hscroll .right { transform: rotate(90deg); }
.hscroll.bottom i { width: 75%; }
.hscroll.bottom { padding-right: 22px; }
.hscroll.top { border-bottom: 1px solid #cfd1d3; height: 20px; }
.dbody { flex: 1; display: grid; grid-template-columns: 33px minmax(0, 1fr) 18px; font-size: 18px; }
.timeline { position: relative; margin: 38px 19px 0 13px; border-left: 1px dashed #aaa; }
.timeline::before { content: ""; position: absolute; top: -13px; left: -6px; width: 11px; height: 11px; border: 1px dashed #777; border-radius: 50%; background: #fcfcfc; }
.dmain { display: flex; flex-direction: column; align-items: flex-start; gap: 10px; padding: 10px 10px 0 0; }
.act { height: 40px; padding: 0 13px; gap: 12px; border-radius: 5px; background: #eff0f2; font-size: 17px; }
.card { align-self: stretch; margin-top: 5px; border: 1px solid #b9bbbd; border-radius: 5px; }
.pubhead { padding: 14px 20px 21px; border-bottom: 2px solid #bbb; }
.prow { display: flex; align-items: center; height: 30px; gap: 10px; padding-right: 4px; }
.prow h3 { font-size: 20px; font-weight: 500; }
.gray { color: #70747a; }
.vlogs { margin-left: auto; gap: 9px; }
.steps { display: grid; grid-template-columns: repeat(4, 1fr); height: 30px; margin-top: 18px; border-radius: 15px; background: #ff9494; overflow: hidden; }
.steps span { position: relative; display: flex; align-items: center; justify-content: center; border-right: 1px solid #fff; border-radius: 0 15px 15px 0; background: #3ecb55; box-shadow: -20px 0 0 #3ecb55; }
.steps span:nth-child(1) { z-index: 4; margin-right: -7px; }
.steps span:nth-child(2) { z-index: 3; margin-right: -4px; }
.steps span:nth-child(3) { z-index: 2; margin-right: -2px; }
.steps .bad { border: 0; background: none; box-shadow: none; }
.fail { padding: 10px; border-bottom: 1px solid #b9bbbd; background: #f5e4e6; color: #8b0000; }
.ftitle { display: flex; align-items: center; gap: 10px; margin-bottom: 5px; color: #111; }
.ftitle svg { color: #d01f1f; }
.fail ul { display: grid; gap: 5px; margin-top: 7px; padding-left: 30px; }
.debug { padding: 10px; border-radius: 0 0 5px 5px; background: #ebecf5; }
.drow { display: flex; align-items: center; margin-bottom: 9px; }
.purple { color: #8a6cff; }
.a { margin: 0 auto 0 10px; color: #5a4a9c; }
.dbg, .dd { height: 40px; background: #b1a1ff; border-radius: 5px 0 0 5px; }
.dbg { padding: 0 12px 0 11px; gap: 9px; }
.dd { width: 42px; margin-left: 1px; border-radius: 0 5px 5px 0; }
.todo { justify-content: flex-start; width: 100%; height: 40px; padding: 0 14px 0 11px; color: #4c4f55; }
.todo b { margin-right: 9px; color: #111; font-weight: 400; }
.todo svg { margin-left: auto; color: #111; stroke-width: 1.8; }
.vscroll { display: flex; flex-direction: column; align-items: center; padding: 7px 0 5px; color: #d5d6d8; }
.vscroll i { flex: 0 1 51%; width: 11px; margin: 6px 0 auto; border-radius: 6px; background: #dbdddf; }

/* stripe */
.stripe { flex: 1; display: flex; background: #fff; color: #414552; font-size: 17px; }
.spage { flex: 1; display: flex; flex-direction: column; min-width: 0; }
.shead { display: flex; align-items: center; height: 65px; border-bottom: 1px solid #d8dce3; }
.close { width: 56px; height: 43px; border-right: 1px solid #d8dce3; }
.shead h1 { margin: 0 20px; font-size: 19px; font-weight: 600; color: #353a44; }
.config { flex: 1; display: flex; flex-direction: column; width: 100%; max-width: 730px; margin: 0 auto; padding-top: 63px; }
.scrollarea { display: flex; gap: 21px; margin-bottom: 10px; }
.fields { flex: 1; min-width: 0; display: flex; flex-direction: column; }
.fields h2 { font-size: 24px; line-height: 32px; font-weight: 700; color: #353a44; }
.lead { margin-top: 2px; font-size: 19px; line-height: 28px; white-space: nowrap; }
.fields h2, .lead, dl, .fields label, .fields small { padding-left: 1px; }
dl { display: grid; grid-template-columns: 125px 1fr; margin: 21px 0 5px; line-height: 30px; }
dt { color: #687385; }
dd svg { color: #414552; vertical-align: -1px; }
.fields label { margin-top: 20px; line-height: 24px; font-size: 16px; font-weight: 600; color: #353a44; }
.fields small { font-size: 14px; line-height: 19px; margin-bottom: 4px; color: #596171; }
.namebox { position: relative; display: flex; align-items: center; height: 37px; margin: 4px 0 1px; padding: 0 10px; border: 1px solid #d0d7e0; border-radius: 7px; box-shadow: 0 0 0 4px #a4daf8; }
.namebox input { flex: 1; }
.namebox button { gap: 5px; color: #533afd; font-size: 16px; font-weight: 600; }
.caret { position: absolute; left: 10px; top: 6px; width: 1px; height: 23px; background: #111; }
.stripe ::placeholder { color: #8792a2; opacity: 1; }
.field { height: 37px; padding: 0 10px; border: 1px solid #d5dbe1; border-radius: 7px; }
textarea.field { height: 137px; margin-top: 9px; padding: 6px 10px; line-height: 26px; resize: vertical; }
.sbar { display: flex; flex-direction: column; align-items: center; width: 8px; margin-top: 1px; color: #d8dce3; }
.sbar i { flex: 1; width: 7px; margin: 5px 0 22px; border-radius: 4px; background: #d8dde6; }
.actions { display: flex; align-items: center; margin-top: 6px; padding: 0 15px 0 6px; height: 39px; font-size: 16px; }
.actions a { margin-right: auto; color: #533afd; }
.back { height: 38px; gap: 8px; padding: 0 10px; border: 1px solid #d5dbe1; border-radius: 7px; font-weight: 600; color: #353a44; }
.create { height: 39px; margin-left: 17px; padding: 0 13px; border-radius: 7px; background: #b3adff; color: #fff; font-weight: 600; }
.sfoot { display: flex; align-items: center; gap: 30px; height: 58px; padding: 3px 31px 0 30px; border-top: 1px solid #d8dce3; background: #f5f6f8; color: #474e5a; }
.sfoot svg { stroke-width: 1.8; }
.sfoot span { margin: 0 auto 0 -15px; }
.wscroll { display: flex; flex-direction: column; justify-content: space-between; align-items: center; width: 19px; padding: 7px 0 2px; background: #fbfbfb; color: #8b8b8b; }

/* taskbar */
.taskbar { display: grid; grid-template-columns: 1fr auto 1fr; align-items: center; height: 60px; padding: 1px 26px 0; background: linear-gradient(90deg, #1f262e, #1f232c 50%, #23262b 60%, #1f232c); color: #fff; font-size: 15px; line-height: 21px; }
.news { display: flex; gap: 6px; align-items: center; }
.news p span { color: #c4c7ca; }
.nicon, .cur { position: relative; }
.nicon svg { display: block; stroke: none; }
.nicon em { position: absolute; top: -7px; right: 0; width: 19px; height: 20px; border-radius: 10px; background: #c62f25; font-size: 14px; line-height: 20px; text-align: center; }
.apps { display: flex; align-items: center; margin-left: 16px; }
.apps svg { stroke: none; }
.search { display: flex; align-items: center; gap: 14px; width: 273px; height: 38px; margin: 0 6px 0 18px; padding: 0 14px; border-radius: 19px; background: #f3f3f3; font-size: 16px; }
.search input { width: 180px; color: #222; }
.search ::placeholder { color: #666; opacity: 1; }
.app { position: relative; display: flex; align-items: center; justify-content: center; width: 49px; height: 49px; margin-right: 6px; }
.run::after, .cur::after { content: ""; position: absolute; bottom: 0; width: 7px; height: 4px; border-radius: 2px; background: #9a9da1; }
.cur { border-radius: 5px; background: #33383e; }
.cur::after { width: 20px; background: #4cc2ff; }
.cur em { position: absolute; top: 4px; right: 3px; width: 19px; height: 19px; border-radius: 50%; background: #0c8577; color: #b7ebe3; font-size: 12px; line-height: 19px; text-align: center; }
.tray { display: flex; align-items: center; justify-content: flex-end; gap: 10px; }
.tray .flipy { margin-right: 16px; stroke-width: 1.8; }
.lang { margin-right: 12px; text-align: center; }
.clock { text-align: right; margin-left: 7px; }
.bell { display: flex; }
```
